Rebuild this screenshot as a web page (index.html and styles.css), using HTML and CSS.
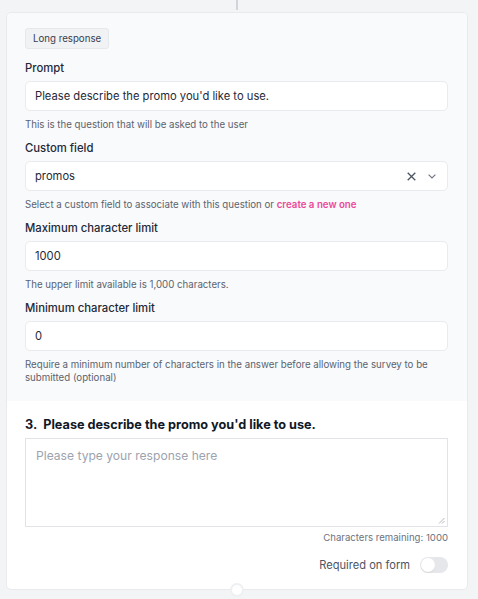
FILE: index.html
```html
<!DOCTYPE html>
<html>
<head>
<meta charset="utf-8">
<link rel="stylesheet" href="styles.css">
</head>
<body>
<div class="page">
  <div class="connector-top"></div>
  <div class="card">
    <div class="settings">
      <div class="badge-row"><span class="badge">Long response</span></div>
      <div class="field first">
        <label class="label">Prompt</label>
        <div class="input">Please describe the promo you'd like to use.</div>
        <p class="help">This is the question that will be asked to the user</p>
      </div>
      <div class="field">
        <label class="label">Custom field</label>
        <div class="input select">
          <span class="value">promos</span>
          <svg class="icon-x" width="9" height="9" viewBox="0 0 9 9"><path d="M0.7 0.7 L8.3 8.3 M8.3 0.7 L0.7 8.3" stroke="#4b5563" stroke-width="1.3" fill="none"/></svg>
          <svg class="icon-chev" width="8" height="5" viewBox="0 0 8 5"><path d="M0.6 0.6 L4 4 L7.4 0.6" stroke="#6b7280" stroke-width="1.1" fill="none"/></svg>
        </div>
        <p class="help">Select a custom field to associate with this question or <a class="link">create a new one</a></p>
      </div>
      <div class="field">
        <label class="label">Maximum character limit</label>
        <div class="input">1000</div>
        <p class="help">The upper limit available is 1,000 characters.</p>
      </div>
      <div class="field">
        <label class="label">Minimum character limit</label>
        <div class="input">0</div>
        <p class="help">Require a minimum number of characters in the answer before allowing the survey to be submitted (optional)</p>
      </div>
    </div>
    <div class="preview">
      <h3 class="question">3.&nbsp; Please describe the promo you'd like to use.</h3>
      <div class="textarea">
        <span class="placeholder">Please type your response here</span>
        <svg class="grip" width="7" height="7" viewBox="0 0 7 7"><path d="M6.5 1 L1 6.5 M6.5 4 L4 6.5" stroke="#9ca3af" stroke-width="0.8"/></svg>
      </div>
      <p class="remaining">Characters remaining: 1000</p>
      <div class="required">
        <span>Required on form</span>
        <span class="toggle"><span class="knob"></span></span>
      </div>
    </div>
    <div class="connector-bottom"></div>
  </div>
</div>
</body>
</html>
```
FILE: styles.css
```css
* { box-sizing: border-box; }
html, body { margin: 0; padding: 0; }
body {
  background: #f3f4f6;
  font-family: Inter, "Noto Sans", sans-serif;
  color: #1f2937;
  width: 478px;
  height: 599px;
  overflow: hidden;
}
.page {
  padding: 0 10px 0 6px;
}
.connector-top {
  width: 2px;
  height: 10px;
  background: #d1d5db;
  margin-left: 230px;
}
.card {
  position: relative;
  margin-top: 2px;
  background: #ffffff;
  border: 1px solid #e8eaed;
  border-radius: 5px;
  height: 578px;
}
.settings {
  background: #f9fafb;
  padding: 15px 19px 0 18px;
  border-radius: 5px 5px 0 0;
  height: 388px;
}
.badge-row { display: flex; }
.badge {
  display: block;
  font-size: 9.7px;
  line-height: 19px;
  padding: 0 7px;
  background: #f1f2f4;
  border: 1px solid #e6e8eb;
  border-radius: 3px;
  color: #374151;
}
.field { margin-top: 6.5px; }
.field.first { margin-top: 8.5px; }
.label {
  display: block;
  font-size: 11.3px;
  line-height: 20px;
  font-weight: 500;
  color: #1f2937;
  margin-bottom: 3.5px;
}
.input {
  height: 30px;
  background: #fff;
  border: 1px solid #e9ebee;
  border-radius: 5px;
  padding: 0 10px 0 9px;
  font-size: 11.2px;
  line-height: 28px;
  color: #1f2937;
  display: flex;
  align-items: center;
}
.select .value { flex: 1; }
.icon-x { margin-right: 12px; }
.icon-chev { margin-right: 1px; }
.help {
  margin: 7px 0 0;
  font-size: 9.7px;
  line-height: 13px;
  color: #5b6370;
}
.link {
  color: #ec4899;
  font-weight: 600;
}
.preview {
  padding: 14px 19px 0 18px;
}
.question {
  margin: 0;
  font-size: 12.7px;
  line-height: 20px;
  font-weight: 700;
  color: #111827;
}
.textarea {
  position: relative;
  margin-top: 3px;
  height: 89px;
  border: 1.5px solid #e1e3e8;
  background: #fff;
  padding: 5px 10px;
}
.placeholder {
  font-size: 12.1px;
  color: #9ca3af;
  line-height: 20px;
}
.grip {
  position: absolute;
  right: 2px;
  bottom: 2px;
}
.remaining {
  margin: 4px 0 0;
  text-align: right;
  font-size: 9.6px;
  line-height: 14px;
  color: #6b7280;
}
.required {
  margin-top: 12px;
  display: flex;
  justify-content: flex-end;
  align-items: center;
  font-size: 11.1px;
  color: #4b5563;
}
.toggle {
  margin-left: 10px;
  width: 28px;
  height: 16px;
  border-radius: 8px;
  background: #e5e7eb;
  position: relative;
  display: inline-block;
}
.knob {
  position: absolute;
  left: 1px;
  top: 1px;
  width: 14px;
  height: 14px;
  border-radius: 50%;
  background: #fff;
  box-shadow: 0 1px 1px rgba(0,0,0,0.08);
}
.connector-bottom {
  position: absolute;
  left: 223px;
  bottom: -8px;
  width: 14px;
  height: 14px;
  border-radius: 50%;
  background: #fff;
  border: 2px solid #eef0f2;
}
```
